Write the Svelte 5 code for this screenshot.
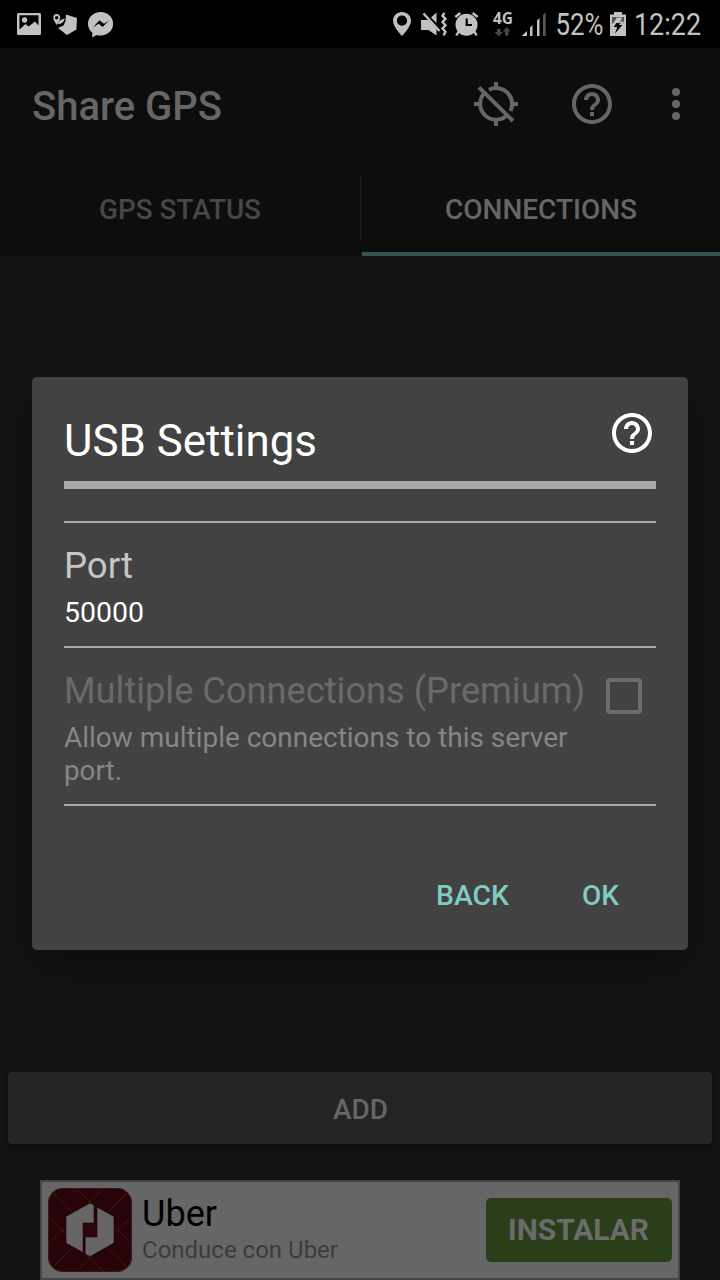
<script>
  const tabs = [
    { label: 'GPS STATUS', width: 162, active: false },
    { label: 'CONNECTIONS', width: 192, active: true }
  ];
</script>

{#snippet label(text, size, weight, width)}
  <svg class="label" style="width:{width + 4}px;height:{size * 1.25}px" aria-label={text}>
    <text x="0" y={size * 0.967} font-size={size} font-weight={weight} textLength={width} lengthAdjust="spacingAndGlyphs">{text}</text>
  </svg>
{/snippet}

{#snippet help()}
  <svg width="48" height="48" viewBox="0 0 24 24" fill="currentColor">
    <path d="M11 18h2v-2h-2v2zm1-16C6.480 2 2 6.480 2 12s4.480 10 10 10 10-4.480 10-10S17.520 2 12 2zm0 18c-4.410 0-8-3.590-8-8s3.590-8 8-8 8 3.590 8 8-3.590 8-8 8zm0-14c-2.210 0-4 1.790-4 4h2c0-1.100.900-2 2-2s2 .900 2 2c0 2-3 1.750-3 5h2c0-2.250 3-2.500 3-5 0-2.210-1.790-4-4-4z" />
  </svg>
{/snippet}

<div class="screen">
  <header class="status">
    <svg width="720" height="48" viewBox="0 0 720 48" fill="#c1c1c1">
      <path fill-rule="evenodd" d="M18.500 13h21q1.500 0 1.500 1.500v19q0 1.500-1.500 1.500h-21q-1.500 0-1.500-1.500v-19q0-1.500 1.500-1.500zM19.500 15.300V29.500l6-5.500 3 2.500 6.500-5 3.500 4V15.300z" />
      <circle cx="24.600" cy="20" r="2.700" />
      <path fill-rule="evenodd" d="M56.700 14c-2 0-3.500 1.600-3.500 3.600 0 2.400 3.500 7.400 3.500 7.400s3.500-5 3.500-7.400c0-2-1.500-3.600-3.500-3.600zm0 2a1.700 1.700 0 1 1 0 3.400 1.700 1.700 0 0 1 0-3.400z" />
      <path d="M66 14.500L77 18l-.600 11.500L67 35l-9-7 5.500-2.500 2-4.500z" />
      <path d="M57.800 24.500q0-4.500 7-6-1 5-7 6z" />
      <path fill-rule="evenodd" d="M100.600 12c-7 0-12.600 5.100-12.600 11.800 0 3.800 1.600 6.800 4.300 9v4.600l4.200-2.500c1.300.4 2.700.6 4.100.6 7 0 12.500-5 12.500-11.700S107.600 12 100.600 12zM93 27.200l6.500-6.900 4.500 3.400 5-3.200-6.400 6.500-3.900-3.200z" />
      <path fill-rule="evenodd" d="M402 12c-5 0-9 3.900-9 8.800C393 27 402 36 402 36s9-9 9-15.200c0-4.900-4-8.800-9-8.800zm0 3.600a5.100 5.100 0 1 1 0 10.200 5.100 5.100 0 0 1 0-10.200z" />
      <path d="M421 20h7l8.500 8v7.500L428.500 30H421zM436.500 12.500V23l-5.500-5.500z" />
      <path d="M423.500 13.500L439.500 31" stroke="#c1c1c1" stroke-width="2.400" />
      <path d="M444.500 13l-2 2.800 3 3-3 3.300 3 3.200-3 3.300 3 3.200-2 3.500" fill="none" stroke="#c1c1c1" stroke-width="2.400" />
      <circle cx="466.500" cy="24.800" r="11" />
      <path d="M459 31l-2.700 4.500M474 31l2.700 4.500M455.300 17l5-4M477.700 17l-5-4" stroke="#c1c1c1" stroke-width="2.400" />
      <path d="M466.700 18.500V25h5.300" stroke="#000" stroke-width="2.200" fill="none" />
      <text x="493" y="24" font-family="Open Sans" font-size="15.500" font-weight="700" textLength="20" lengthAdjust="spacingAndGlyphs">4G</text>
      <path fill="#484848" d="M497 29h3.500v3h2.500l-4.200 4.500-4.300-4.500H497zM505 35.500h3.500v-4h2.200l-4-4.500-4 4.500h2.300z" />
      <path d="M521.500 36l5.500-5v5zM530 27.500l2.500-2.500v11H530zM537 20.500l2.500-2.500v18H537z" />
      <path fill="#555" d="M543 15l2.700-3v24H543z" />
      <text x="555.500" y="35" font-size="31" textLength="48" lengthAdjust="spacingAndGlyphs">52%</text>
      <path d="M614 12h8v2.500h4V36h-16V14.500h4z" />
      <path fill="#555" d="M612 17h12v6.500h-12z" />
      <path d="M616.800 17.500h5.400l-1.800 4h3.200v3h-11z" />
      <path fill="#000" d="M616.300 23l-2.500 4h3.400l-2.200 6.500 7.400-8.500h-3.300l2-3-2.300 1.200z" />
      <text x="634" y="35" font-size="31" textLength="67" lengthAdjust="spacingAndGlyphs">12:22</text>
    </svg>
  </header>

  <div class="toolbar">
    <h1>{@render label('Share GPS', 40, 500, 190)}</h1>
    <nav>
      <svg width="48" height="48" viewBox="0 0 48 48" fill="none" stroke="currentColor" stroke-width="4">
        <path d="M17 9.700A16 16 0 0 1 38.500 31M34.900 35.600A16 16 0 0 1 12.300 13" />
        <path d="M24 2v7M24 39v7M2 24h7M39 24h7M7 7.300L41 41" />
      </svg>
      <span class="help">{@render help()}</span>
      <svg class="more" width="12" height="36" fill="currentColor">
        <circle cx="6" cy="6" r="4" /><circle cx="6" cy="18" r="4" /><circle cx="6" cy="30" r="4" />
      </svg>
    </nav>
  </div>

  <div class="tabs">
    {#each tabs as tab}
      <div class="tab" class:active={tab.active}>{@render label(tab.label, 28, 500, tab.width)}</div>
    {/each}
  </div>

  <main></main>

  <button class="add">{@render label('ADD', 28, 500, 55)}</button>

  <section class="ad">
    <svg class="logo" width="84" height="84" viewBox="0 0 84 84">
      <defs><clipPath id="tile"><rect width="84" height="84" rx="15" /></clipPath></defs>
      <g clip-path="url(#tile)">
        <rect width="84" height="84" fill="#27040a" />
        <g fill="none" stroke="#4a1a06" stroke-width=".8">
          <path d="M0 0l84 84M84 0L0 84M-14 14l84 84M14-14l84 84M98 14L14 98M70-14l-84 84" />
          <path d="M42-14l56 56-56 56-56-56zM28-14l70 70M56-14l-70 70M-14 28l70 70M98 28L28 98" stroke="#37070b" />
        </g>
        <rect x=".5" y=".5" width="83" height="83" rx="14.500" fill="none" stroke="#3d1519" />
      </g>
      <path fill="#666" stroke="#180207" stroke-width=".6" d="M42 15L46 17.300V35H35V64.500L18 55V28.500zM49 19L66 28.500V55L42 68.500L37.200 66V49H49z" />
      <path fill="#2b050c" d="M35 35h14v14H35z" />
    </svg>
    <div class="copy">
      <div class="name">{@render label('Uber', 36, 400, 75)}</div>
      <div class="tagline">{@render label('Conduce con Uber', 24, 400, 196)}</div>
    </div>
    <button class="install">{@render label('INSTALAR', 29, 700, 141)}</button>
  </section>

  <div class="overlay">
    <div class="dialog">
      <div class="heading">
        <h2>{@render label('USB Settings', 44, 400, 253)}</h2>
        {@render help()}
      </div>
      <div class="port">
        <div class="caption">{@render label('Port', 36, 400, 69)}</div>
        <div class="value">{@render label('50000', 28, 400, 80)}</div>
      </div>
      <div class="multiple">
        <div>
          <div class="option">{@render label('Multiple Connections (Premium)', 36, 400, 521)}</div>
          <div class="hint">{@render label('Allow multiple connections to this server', 28, 400, 503.5)}</div>
          <div class="hint">{@render label('port.', 28, 400, 58)}</div>
        </div>
        <span class="checkbox"></span>
      </div>
      <div class="actions">
        <button>{@render label('BACK', 28, 500, 73)}</button>
        <button>{@render label('OK', 28, 500, 37)}</button>
      </div>
    </div>
  </div>
</div>

<style>
  :global(body) { margin: 0; background: #131313; }
  * { box-sizing: border-box; }
  .screen { position: relative; width: 720px; height: 1280px; overflow: hidden; display: flex; flex-direction: column; background: #131313; font-family: Roboto, sans-serif; color: #666; }
  svg { display: block; flex: none; }
  .label { overflow: visible; fill: currentColor; margin-right: -4px; }
  h1, h2 { margin: 0; font-weight: 400; }
  button { border: 0; padding: 0; font: inherit; color: inherit; display: flex; align-items: center; justify-content: center; }
  .status { height: 48px; background: #000; }
  .toolbar { height: 112px; background: #0d0d0d; display: flex; align-items: center; justify-content: space-between; padding: 0 38px 0 32px; }
  .toolbar h1 { padding-top: 4px; }
  nav { display: flex; align-items: center; }
  .help { margin-left: 48px; }
  .more { margin-left: 54px; }
  .tabs { height: 96px; display: grid; grid-template-columns: 362px 358px; background: #0d0d0d; }
  .tab { display: flex; align-items: center; justify-content: center; color: #474747; padding: 3px 2px 0 0; background: linear-gradient(#171717, #171717) 360px 16px / 2px 64px no-repeat; }
  .tab.active { color: #666; border-bottom: 4px solid #335450; padding: 7px 0 0; background: none; }
  main { flex: 1; }
  .add { flex: none; height: 72px; margin: 0 8px 36px; border-radius: 4px; background: #242424; box-shadow: 0 3px 5px #0c0c0c; padding: 3px 0 0 1px; }
  .ad { flex: none; height: 100px; margin: 0 40px; border: 2px solid #454545; background: #666; display: flex; align-items: flex-start; padding: 6px 6px 0; }
  .copy { margin-left: 10px; flex: 1; }
  .name { color: #000; height: 45px; margin-top: 3px; }
  .tagline { color: #3b3b3b; margin-top: -1px; }
  .install { width: 186px; height: 64px; margin-top: 10px; padding-right: 2px; border-radius: 5px; background: #2a3e19; color: #6b6b6b; }
  .overlay { position: absolute; inset: 377px 32px auto; }
  .dialog { height: 573px; border-radius: 5px; background: #424242; padding: 0 32px; color: #fff; box-shadow: 0 16px 48px rgba(0, 0, 0, .35); display: flex; flex-direction: column; }
  .heading { height: 112px; flex: none; display: flex; justify-content: space-between; border-bottom: 8px solid #a9a9a9; padding-top: 32px; }
  .heading h2 { padding-top: 4px; }
  .port { flex: none; height: 127px; margin-top: 32px; border-top: 2px solid #a9a9a9; border-bottom: 2px solid #a9a9a9; padding-top: 20px; }
  .caption { color: #c6c6c6; }
  .value { margin-top: 7px; }
  .multiple { flex: none; height: 158px; border-bottom: 2px solid #a9a9a9; display: flex; justify-content: space-between; padding: 20px 14px 0 0; }
  .option { color: #6a6a6a; }
  .hint { color: #868686; height: 33px; }
  .option + .hint { margin-top: 7px; }
  .checkbox { width: 36px; height: 36px; border: 4px solid #6c6c6c; border-radius: 4px; margin-top: 10px; }
  .actions { display: flex; justify-content: flex-end; gap: 73px; margin: 72px 37px 0 0; color: #80cbc4; }
  .actions button { background: none; height: 35px; }
</style>
